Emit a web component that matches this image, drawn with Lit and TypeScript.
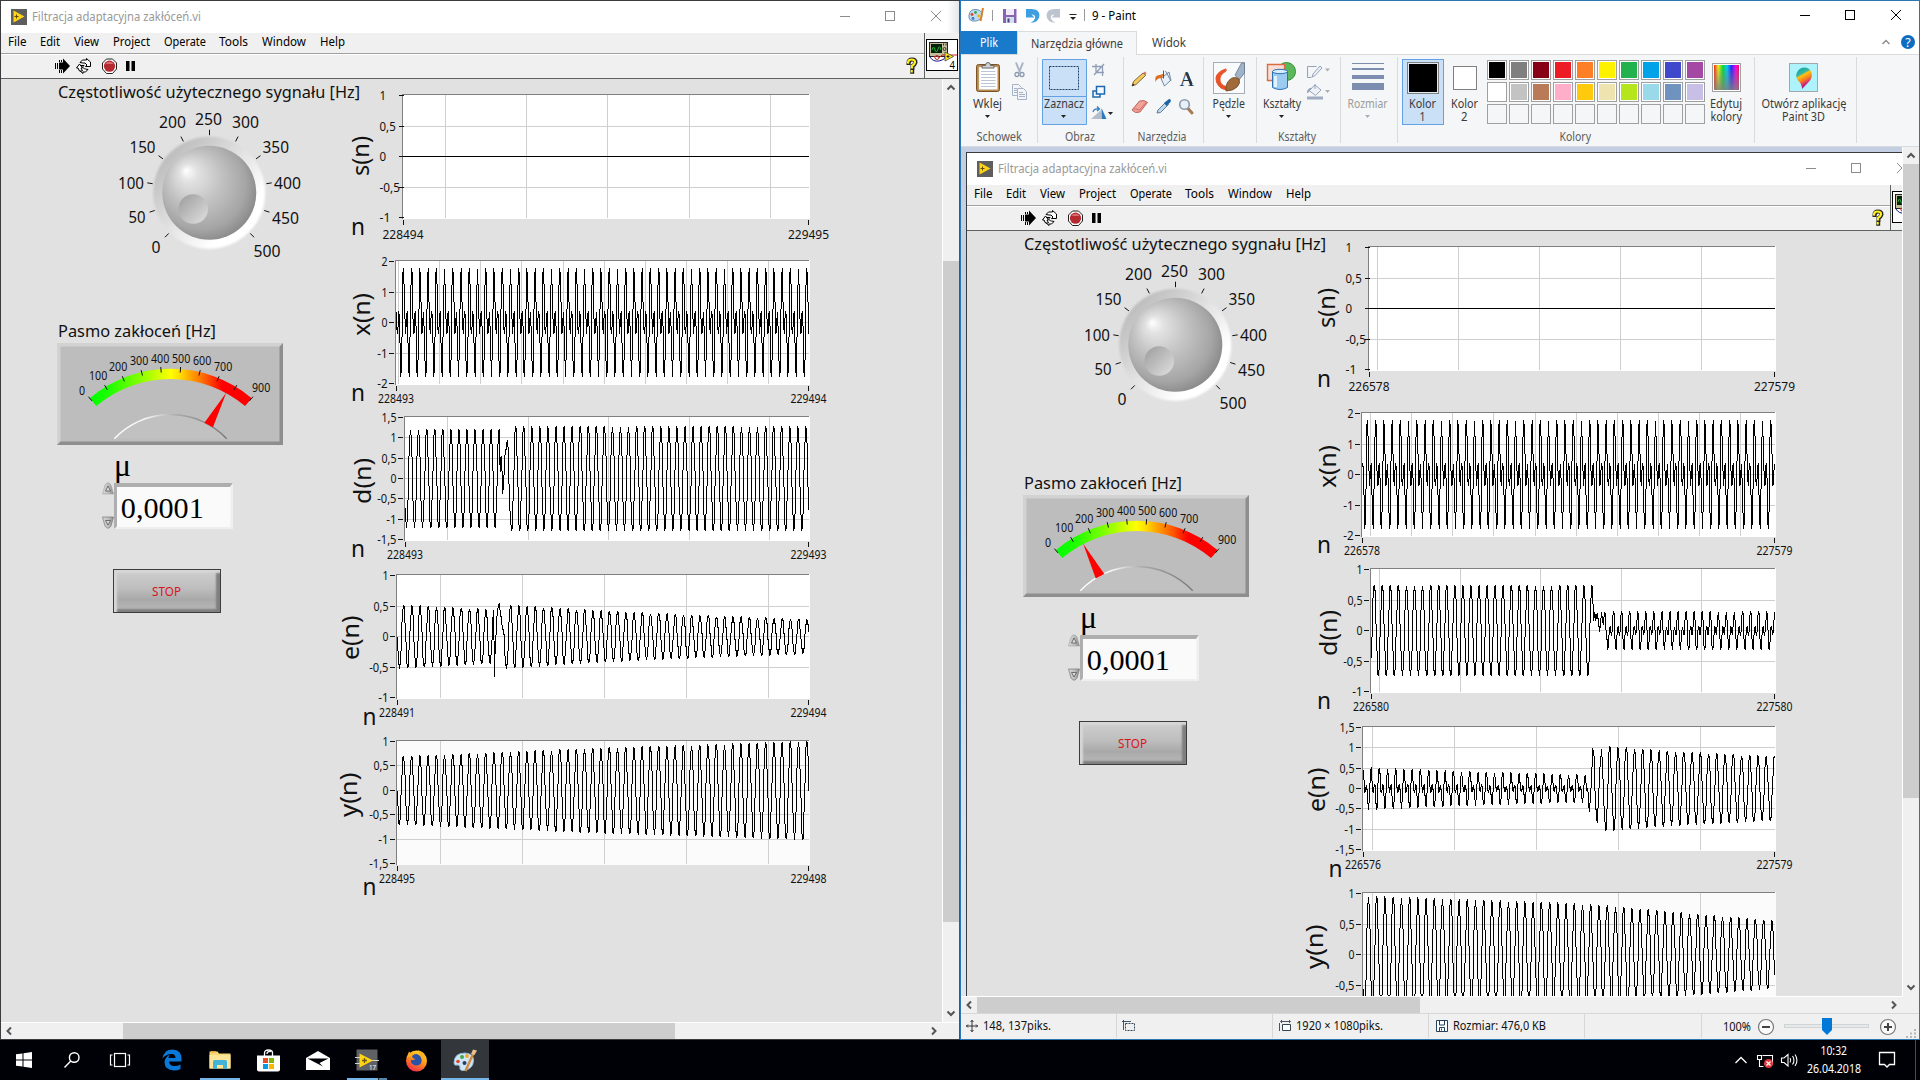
import { LitElement, html, svg, css, nothing } from "lit";
import { customElement, property } from "lit/decorators.js";

const FONT = `"Noto Sans","Open Sans",sans-serif`;

/** SVG text fitted to a given width. */
const T = (s: string, x: number, y: number, w: number, size = 12, fill = "#111", family = FONT) =>
  svg`<text x=${x} y=${y} textLength=${w} lengthAdjust="spacingAndGlyphs" font-size=${size} fill=${fill} font-family=${family}>${s}</text>`;

/** Inline label of a fixed width, usable in flex rows. */
const L = (s: string, w: number, size = 12, fill = "#111") =>
  html`<svg width=${w} height="16" overflow="visible">${T(s, 0, 12, w, size, fill)}</svg>`;

type Tick = [number, string];
type Wave = (x: number) => number;
interface Chart {
  name: string; nameX: number; nameY: number; nameLen: number;
  top: number; h: number;            // slice of the panel that the chart takes
  x0: number; y0: number; y1: number;
  zero: number; unit: number;        // y of value 0, pixels per 1
  ticks: Tick[]; grid: number[];
  from?: string; to?: string;
  nX: number; nY: number;
  at: number; period: number;        // x of one crest, pixels per cycle
  wave: Wave; bg?: string; wide?: boolean;
}

const TAU = Math.PI * 2;
const peakSin = (x: number, peak: number, period: number) => Math.cos((TAU * (x - peak)) / period);
const double = (x: number, peak: number, period: number, dir = 1) => {
  const t = dir * (TAU * (x - peak)) / period + 0.936;
  return Math.sin(t) + Math.sin(2 * t);
};
const lerp = (pts: [number, number][], x: number) => {
  if (x <= pts[0][0]) return pts[0][1];
  for (let i = 1; i < pts.length; i++)
    if (x <= pts[i][0]) {
      const [a, b] = [pts[i - 1], pts[i]];
      return a[1] + ((b[1] - a[1]) * (x - a[0])) / (b[0] - a[0]);
    }
  return pts[pts.length - 1][1];
};

const P = 8.232, Q = 8.062;
const base = {
  s: { name: "s(n)", nameX: 368.5, nameY: 176, nameLen: 40, top: 79, h: 170, x0: 402.5, y0: 94.5, y1: 218.5, nX: 351, nY: 234.5, wide: true, at: 403, period: P },
  x: { name: "x(n)", nameX: 369.5, nameY: 336, nameLen: 43, top: 249, h: 162, x0: 395.5, y0: 260.5, y1: 384.5, nX: 351, nY: 400.5, period: P },
  d: { name: "d(n)", nameX: 370.5, nameY: 504, nameLen: 46, top: 411, h: 156, x0: 404.5, y0: 416.5, y1: 540.5, nX: 351, nY: 557, period: Q },
  e: { name: "e(n)", nameX: 359, nameY: 660, nameLen: 44.5, top: 567, h: 166, x0: 396.5, y0: 574.5, y1: 698.5, nX: 362.5, nY: 725, period: P },
  y: { name: "y(n)", nameX: 357, nameY: 817, nameLen: 44.5, top: 733, h: 170, x0: 396.5, y0: 740.5, y1: 864.5, nX: 362.5, nY: 895, bg: "#fbfbfb", period: P },
};
const T1: Tick[] = [[575.5, "1"], [606.5, "0,5"], [636.5, "0"], [667.5, "-0,5"], [697.5, "-1"]];
const T15: Tick[] = [[575.5, "1,5"], [595.5, "1"], [616.5, "0,5"], [636.5, "0"], [656.5, "-0,5"], [677.5, "-1"], [697.5, "-1,5"]];
const shift = (t: Tick[], d: number): Tick[] => t.map(([y, s]) => [y + d, s]);
const TX: Tick[] = [[261.5, "2"], [292.5, "1"], [322.5, "0"], [353.5, "-1"], [383.5, "-2"]];
const TS: Tick[] = [[95.5, "1"], [126.5, "0,5"], [156.5, "0"], [187.5, "-0,5"], [217.5, "-1"]];

const LEFT: Chart[] = [
  { ...base.s, zero: 156.5, unit: 61, ticks: TS, grid: [445.5, 526.5, 607.5, 689.5, 770.5], from: "228494", to: "229495", wave: () => 0 },
  { ...base.x, at: 403.4, zero: 322.5, unit: 30.5, ticks: TX, grid: [398.5, 439.5, 480.5, 521.5, 563.5, 604.5, 645.5, 686.5, 727.5, 768.5], from: "228493", to: "229494", wave: (x) => double(x, 403.4, P) },
  {
    ...base.d, at: 410.5, zero: 478.5, unit: 40.7, ticks: shift(T15, -158), grid: [447.5, 528.5, 608.5, 689.5, 769.5], from: "228493", to: "229493",
    wave: (x) => x < 499.5 ? 1.21 * peakSin(x, 410.5, Q)
      : x < 511.5 ? lerp([[499.5, 1.18], [500.3, 0.1], [501, 0.65], [502.8, -0.38], [505, 0.6], [507.3, 0.93], [508.5, 0.6], [509.5, -0.7], [511.5, -1.27]], x)
      : 1.28 * peakSin(x, 515.7, Q),
  },
  {
    ...base.e, at: 403.6, zero: 636.5, unit: 61, ticks: T1, grid: [440.5, 522.5, 604.5, 686.5, 768.5], from: "228491", to: "229494",
    wave: (x) => x < 493.8 ? lerp([[397, 0.52], [494, 0.44]], x) * peakSin(x, 403.6, P)
      : x < 506 ? lerp([[493.8, 0.4], [494.2, -0.66], [494.7, -0.66], [495, -0.36], [497, 0.4], [499.3, 0.55], [501.5, 0.25], [504, 0.02], [505.5, -0.46], [506, -0.5]], x)
      : lerp([[506, 0.52], [600, 0.42], [700, 0.345], [809, 0.28]], x) * peakSin(x, 403.6, P),
  },
  {
    ...base.y, at: 403.4, zero: 790.5, unit: 48.8, ticks: [[741.5, "1"], [765.5, "0,5"], [790.5, "0"], [814.5, "-0,5"], [839.5, "-1"], [863.5, "-1,5"]],
    grid: [440.5, 522.5, 604.5, 686.5, 768.5], from: "228495", to: "229498",
    wave: (x) => lerp([[397, 0.69], [500, 0.78], [600, 0.87], [700, 0.93], [809, 1.01]], x) * peakSin(x, 403.4, P),
  },
];
const RIGHT: Chart[] = [
  { ...base.s, zero: 156.5, unit: 61, ticks: TS, grid: [411.5, 492.5, 573.5, 654.5, 735.5], from: "226578", to: "227579", wave: () => 0 },
  { ...base.x, at: 401.4, zero: 322.5, unit: 30.5, ticks: TX, grid: [404.5, 445.5, 486.5, 527.5, 569.5, 610.5, 651.5, 692.5, 733.5, 774.5], from: "226578", to: "227579", wave: (x) => double(x, 401.4, P) },
  {
    ...base.d, at: 408.2, zero: 478.5, unit: 61, ticks: shift(T1, -158), grid: [413.5, 494.5, 574.5, 655.5, 735.5], from: "226580", to: "227580",
    wave: (x) => x < 626.3 ? 0.745 * peakSin(x, 408.2, Q)
      : x < 642 ? lerp([[626.3, 0.66], [627.7, 0.12], [628.6, 0.3], [629.8, 0.15], [631, 0.29], [632, 0.22], [633.7, -0.05], [635.5, 0.32], [637.2, 0.1], [639, 0.32], [640.4, -0.05], [642, -0.31]], x)
      : 0.18 * double(x, 647.5, Q, -1),
  },
  {
    ...base.e, at: 405, zero: 636.5, unit: 40.7, ticks: T15, grid: [406.5, 488.5, 570.5, 652.5, 734.5], from: "226576", to: "227579",
    wave: (x) => x < 622 ? lerp([[397, 0.295], [500, 0.235], [622, 0.187]], x) * double(x, 405, P)
      : x < 639.5 ? lerp([[622, 0.0], [623.2, -0.6], [624, -0.45], [625, 0], [626.6, 1.01], [628, 0.8], [629.6, -0.45], [631.4, -0.84], [633.3, 0.3], [635.7, 1.04], [637.3, 0], [639.5, -1.04]], x)
      : lerp([[639, 1.04], [700, 0.92], [809, 0.78]], x) * peakSin(x, 643.8, P),
  },
  {
    ...base.y, at: 402.5, zero: 802.5, unit: 61, ticks: [[741.5, "1"], [772.5, "0,5"], [802.5, "0"], [833.5, "-0,5"]],
    grid: [406.5, 488.5, 570.5, 652.5, 734.5],
    wave: (x) => lerp([[397, 0.96], [600, 0.84], [640, 0.8], [690, 0.72], [735, 0.65], [809, 0.55]], x) * peakSin(x, 402.5, P),
  },
];

/** Polyline of a wave taken at 20 samples per cycle, snapped to whole pixels. */
const trace = (c: Chart) => {
  const dx = c.period / 20;
  let out = "", last = "";
  for (let k = Math.ceil((c.x0 + 0.6 - c.at) / dx); c.at + k * dx < 809; k++) {
    const x = c.at + k * dx;
    const p = `${Math.floor(x) + 0.5},${Math.round(c.zero - c.wave(x) * c.unit - 0.5) + 0.5}`;
    if (p !== last) out += p + " ";
    last = p;
  }
  return out;
};
const numWidth = (s: string, wide = false) =>
  [...s].reduce((a, ch) => a + (ch === "," ? 3 : ch === "-" ? 4.3 : wide ? 6.6 : 6), 0);

/** Classic thin scroll bar with arrow heads and a thumb given in pixels. */
@customElement("scroll-bar")
class ScrollBar extends LitElement {
  @property({ type: Boolean, reflect: true }) horizontal = false;
  @property({ type: Number }) before = 0;
  @property({ type: Number }) thumb = 100;
  static styles = css`
    :host { display: flex; flex-direction: column; align-items: stretch; width: 17px; box-sizing: border-box; background: #f0f0f0; border-left: 1px solid #fff; }
    :host([horizontal]) { flex-direction: row; width: auto; height: 17px; border-left: 0; border-top: 1px solid #fff; }
    .arrow { flex: none; width: 16px; height: 16px; }
    .thumb { background: #cdcdcd; flex: none; }
    .rest { flex: 1; }
    path { fill: none; stroke: #555; stroke-width: 2; }
  `;
  arrow(d: string) { return html`<svg class="arrow" viewBox="0 0 16 16"><path d=${d} /></svg>`; }
  render() {
    const h = this.horizontal;
    return html`
      ${this.arrow(h ? "M10 4.5L6.5 8L10 11.5" : "M4.5 10.5L8 7L11.5 10.5")}
      <div style=${h ? `width:${this.before}px` : `height:${this.before}px`}></div>
      <div class="thumb" style=${h ? `width:${this.thumb}px` : `height:${this.thumb}px`}></div>
      <div class="rest"></div>
      ${this.arrow(h ? "M5 4.5L8.5 8L5 11.5" : "M4.5 5.5L8 9L11.5 5.5")}`;
  }
}

/** A LabVIEW front panel window. */
@customElement("vi-window")
class ViWindow extends LitElement {
  @property({ attribute: false }) charts: Chart[] = LEFT;
  @property({ type: Number }) needle = 28.6;
  @property({ type: Boolean }) cropped = false;
  static styles = css`
    :host { display: block; width: 960px; height: 1040px; box-sizing: border-box; background: #e1e1e1; border: 1px solid #3b3b3f; border-right: 0; }
    svg { display: block; flex: none; overflow: visible; }
    .win { display: flex; flex-direction: column; width: 958px; height: 1038px; border-right: 1px solid #4a5560; }
    .title { display: flex; align-items: center; height: 32px; background: linear-gradient(90deg, #fff 946px, #e4e6e8); padding-left: 10px; }
    .title .name { margin: 0 0 0 5px; }
    .ctl { margin-left: auto; }
    .bars { display: flex; height: 46px; background: #f0f0f0; border-bottom: 1px solid #606460; box-sizing: border-box; }
    .left { flex: 1; display: flex; flex-direction: column; }
    .menu { display: flex; gap: 13.900px; align-items: flex-start; padding: 1px 0 0 6.500px; height: 19px; border-bottom: 1px solid #a0a0a0; box-shadow: 0 1px #fff; }
    .tools { display: flex; align-items: center; height: 25px; }
    .run { margin-left: 54px; }
    .help { margin-left: auto; margin-right: 6px; }
    .corner { width: 35px; border-left: 1px solid #606460; display: flex; align-items: center; padding: 0 0 1px 1px; box-sizing: border-box; }
    .body { display: flex; flex: 1; min-height: 0; }
    .panel { display: flex; flex: 1; background: #e1e1e1; overflow: hidden; }
    .controls { width: 333px; flex: none; display: flex; flex-direction: column; }
    .plots { flex: none; display: flex; flex-direction: column; width: 500px; }
    .gauge { margin: 51px 0 0 56px; }
    .mu { margin: 4px 0 0 100px; }
    .stop { margin: 40px 0 0 112px; width: 108px; height: 44px; box-sizing: border-box; border: 1px solid #3c3c3c; background: linear-gradient(#cfcfcf, #bdbdbd 45%, #a9a9a9 70%, #bababa); box-shadow: inset 3px 3px 2px #d6d6d6, inset -4px -3px 2px #7f7f7f; display: flex; align-items: center; justify-content: center; padding: 2px 1px 0 0; }
    .foot { display: flex; height: 17px; }
    .foot scroll-bar { flex: 1; }
    .gap { width: 16px; background: #f0f0f0; border-top: 1px solid #fff; }
  `;

  chart(c: Chart) {
    const tx = c.wide ? 398.5 : c.x0 - 6.5;
    const lblW = c.wide ? 41 : 36;
    const ly = c.y1 + 18.5 + (c.wide ? 2 : 0);
    return html`<svg width="500" height=${c.h} viewBox="334 ${c.top} 500 ${c.h}">
      <g shape-rendering="crispEdges">
        <rect x=${c.x0 - 0.5} y=${c.y0 - 0.5} width=${810.5 - c.x0} height=${c.y1 - c.y0 + 0.5} fill=${c.bg ?? "#fff"} />
        ${c.grid.map((x) => svg`<path d="M${x} ${c.y0}V${c.y1 - 0.5}" stroke="#cfcfcf" />`)}
        ${c.ticks.slice(1, c.from ? -1 : undefined).map(([y]) => svg`<path d="M${c.x0} ${y}H809" stroke="#cfcfcf" />`)}
        <path d="M${c.x0} ${c.y1}V${c.y0}H809" fill="none" stroke="#808080" />
        ${c.ticks.map(([y]) => svg`<path d="M${tx} ${y}h5" stroke="#111" />`)}
        <path d="M${c.x0 + 1} ${c.y1 + 1.5}v5M808.5 ${c.y1 + 1.5}v5" stroke="#111" />
        <polyline points=${trace(c)} fill="none" stroke="#000" />
      </g>
      ${c.ticks.map(([y, s]) => {
        const w = numWidth(s, c.wide);
        return T(s, c.wide ? 379.5 : c.x0 - 8 - w, y + 4.8, w, 12.5);
      })}
      ${c.from ? T(c.from, c.x0 + 0.5 - lblW / 2, ly, lblW, 12.5) : nothing}
      ${c.to ? T(c.to, 808.5 - lblW / 2, ly, lblW, 12.5) : nothing}
      ${c.from ? T("n", c.nX, c.nY, 14, 24) : nothing}
      <g transform="translate(${c.nameX} ${c.nameY}) rotate(-90)">${T(c.name, 0, 0, c.nameLen, 23)}</g>
    </svg>`;
  }

  knob() {
    const cx = 209.5, cy = 192.7;
    const marks = Array.from({ length: 11 }, (_, i) => {
      const a = ((-135 + 27 * i) * Math.PI) / 180, s = Math.sin(a), c = -Math.cos(a);
      return svg`<path d="M${cx + 57.5 * s} ${cy + 57.5 * c}L${cx + 63 * s} ${cy + 63 * c}" stroke="#111" />`;
    });
    const labels: [string, number, number, number][] = [
      ["0", 151.5, 253, 9], ["50", 128.5, 223, 17], ["100", 118, 188.5, 26], ["150", 129.5, 152.5, 26], ["200", 159, 128, 27], ["250", 195, 124.5, 27],
      ["300", 232, 128, 27], ["350", 262.5, 152.5, 26.5], ["400", 274, 188.5, 27], ["450", 272, 223.5, 27], ["500", 253.5, 256.5, 27],
    ];
    return html`<svg width="333" height="187" viewBox="1 79 333 187">
      <defs>
        <linearGradient id="ring" x1=".12" y1=".15" x2=".85" y2=".85"><stop offset="0" stop-color="#bcbcbc" /><stop offset=".5" stop-color="#e4e4e4" /><stop offset=".85" stop-color="#fff" /></linearGradient>
        <radialGradient id="ball" cx=".5" cy=".5" r=".78" fx=".25" fy=".26"><stop offset="0" stop-color="#fff" /><stop offset=".12" stop-color="#e2e2e2" /><stop offset=".35" stop-color="#c4c4c4" /><stop offset=".62" stop-color="#a5a5a5" /><stop offset=".8" stop-color="#808080" /><stop offset="1" stop-color="#333" /></radialGradient>
        <linearGradient id="dimple" x1=".1" y1=".1" x2=".9" y2=".9"><stop offset="0" stop-color="#a2a2a2" /><stop offset="1" stop-color="#dadada" /></linearGradient>
        <filter id="soft" x="-10%" y="-10%" width="120%" height="120%"><feGaussianBlur stdDeviation="1" /></filter>
      </defs>
      ${T("Częstotliwość użytecznego sygnału [Hz]", 58, 98, 302, 16)}
      ${marks}
      ${labels.map(([s, x, y, w]) => T(s, x, y, w, 16))}
      <circle cx="209.2" cy="192.7" r="56" fill="url(#ring)" filter="url(#soft)" />
      <circle cx="209.3" cy="192.8" r="47" fill="url(#ball)" />
      <circle cx="193.2" cy="209" r="14.8" fill="url(#dimple)" />
    </svg>`;
  }

  gauge() {
    const cx = 170.7, cy = 494.7;
    const pt = (deg: number, r: number) => {
      const a = (deg * Math.PI) / 180;
      return `${(cx + r * Math.sin(a)).toFixed(2)} ${(cy - r * Math.cos(a)).toFixed(2)}`;
    };
    const labels: [string, number, number][] = [
      ["0", 82, 395], ["100", 98, 380], ["200", 118, 371], ["300", 139, 365], ["400", 160, 363], ["500", 181, 363], ["600", 202, 365], ["700", 223, 371], ["900", 261, 392],
    ];
    const n = this.needle;
    return html`<svg class="gauge" width="226" height="128" viewBox="57 317 226 128">
      <defs>
        <linearGradient id="scale" gradientUnits="userSpaceOnUse" x1="90" y1="0" x2="251" y2="0"><stop offset="0" stop-color="#0f0" /><stop offset=".12" stop-color="#1eff00" /><stop offset=".3" stop-color="#80ff00" /><stop offset=".5" stop-color="#ff0" /><stop offset=".56" stop-color="#ffdc00" /><stop offset=".62" stop-color="#ffa800" /><stop offset=".72" stop-color="#ff5c00" /><stop offset=".82" stop-color="#f00" /></linearGradient>
        <linearGradient id="hub" x1="0" x2="1"><stop offset="0" stop-color="#fff" /><stop offset=".3" stop-color="#f4f4f4" /><stop offset=".55" stop-color="#aaa" /><stop offset="1" stop-color="#777" /></linearGradient>
      </defs>
      ${T("Pasmo zakłoceń [Hz]", 58, 337, 158, 16)}
      <rect x="57" y="343" width="226" height="102" fill="#bdbdbd" />
      <path d="M57 343H283L280 346.500H60.500V441L57 445Z" fill="#d2d2d2" />
      <path d="M283 343V445H57L60.500 441.500H279.500V346.500Z" fill="#8e8e8e" />
      <path d="M${pt(-40, 126)}A126 126 0 0 1 ${pt(40, 126)}L${pt(40, 115.7)}A115.700 115.700 0 0 0 ${pt(-40, 115.7)}Z" fill="url(#scale)" />
      ${Array.from({ length: 10 }, (_, i) => svg`<path d="M${pt(-40 + (80 / 9) * i, 122.5)}L${pt(-40 + (80 / 9) * i, 128)}" stroke="#111" />`)}
      ${labels.map(([s, x, y]) => T(s, x - s.length * 3, y, s.length * 6.1, 12.3))}
      <path d="M114.300 438.700A77.400 77.400 0 0 1 226.700 438.700Z" fill="#c1c1c1" />
      <path d="M114.300 438.700A77.400 77.400 0 0 1 226.700 438.700" fill="none" stroke="url(#hub)" stroke-width="1.4" />
      <path d="M${pt(n, 116)}L${pt(n - 3.5, 79.5)}L${pt(n + 3.5, 79.5)}Z" fill="#f00" />
    </svg>`;
  }

  mu() {
    return html`<svg class="mu" width="133" height="80" viewBox="101 449 133 80">
      <defs><linearGradient id="spin" x1="0" x2="1"><stop offset="0" stop-color="#d8d8d8" /><stop offset=".6" stop-color="#bbb" /><stop offset="1" stop-color="#888" /></linearGradient></defs>
      ${T("μ", 114, 476, 17, 32, "#000", "Liberation Serif, serif")}
      <path d="M114 483H233L230 487H117V526L114 529Z" fill="#aeaeae" />
      <path d="M233 483V529H114L117 527H230V487Z" fill="#efefef" />
      <rect x="117" y="487" width="113.500" height="40" fill="#fafafa" />
      ${T("0,0001", 120.8, 518, 83, 30, "#000", "Liberation Serif, serif")}
      <path d="M102.500 494L105 485Q108 480.500 111 485L113.500 494Z" fill="url(#spin)" stroke="#999" stroke-width=".5" />
      <path d="M105.500 491L108 486L110.500 491H105.500" fill="#ddd" stroke="#555" stroke-width=".8" />
      <path d="M102.500 517L105 526Q108 530.500 111 526L113.500 517Z" fill="url(#spin)" stroke="#777" stroke-width=".7" />
      <path d="M105.500 520.500L108 525L110.500 520.500Z" fill="#ddd" stroke="#555" stroke-width=".8" />
    </svg>`;
  }

  render() {
    const menu: [string, number][] = [["File", 18.5], ["Edit", 20], ["View", 25], ["Project", 37], ["Operate", 42], ["Tools", 29], ["Window", 44], ["Help", 25]];
    return html`<div class="win">
      <div class="title">
        <svg width="16" height="16" viewBox="0 0 16 16"><rect width="16" height="16" fill="#5e5e5e" /><path d="M2.500 1.500L13.500 7.500L2.500 13.500Z" fill="#ffd415" /><path d="M3.500 7.500h4M5.500 5.500v4" stroke="#5e4a00" /></svg>
        <div class="name">${L("Filtracja adaptacyjna zakłóceń.vi", 169, 12, "#999")}</div>
        <svg class="ctl" width="120" height="32" viewBox="839 1 120 32" fill="none" stroke="#8b8b8b">
          <path d="M840 16.500h10" shape-rendering="crispEdges" /><rect x="885.500" y="11.500" width="9" height="9" shape-rendering="crispEdges" /><path d="M931 11l10 10M941 11l-10 10" />
        </svg>
      </div>
      <div class="bars">
        <div class="left">
          <div class="menu">${menu.map(([s, w]) => L(s, w, 12, "#000"))}</div>
          <div class="tools">
            <svg class="run" width="82" height="16" viewBox="55 58 82 16">
              <path d="M59 62.500h4v-4l7 7.500l-7 7.500v-4h-4Z" fill="#000" /><path d="M55.500 63v6M57.500 63v6M59.500 60v2M61.500 60v2M59.500 70v3M61.500 70v3" stroke="#000" stroke-width="1" shape-rendering="crispEdges" />
              <g fill="#fff" stroke="#000" stroke-width="1"><path d="M80 62.500l2.500-2.500h4v-1.500l4 3.500v4.500h-5l1.500-1.500l-2-2h-2Z" /><path d="M88 69.500l-2.500 2.500h-2.500v1.500l-4-3.500v-4.500h5l-1.500 1.500l2 2h1Z" /><path d="M76.500 68l3-4l3 4h-1.500l1.500 3h-3l-1.500-3Z" /></g>
              <path d="M106.500 59h6l4 4v6l-4 4.500h-6l-4-4.500v-6Z" fill="#fff" stroke="#222" /><circle cx="109.500" cy="66.200" r="5.600" fill="#b42a30" /><path d="M105.500 64a4.500 4 0 0 1 8 0Z" fill="#dc6a6e" />
              <path d="M126 61h3.500v10h-3.500ZM131.500 61h3.500v10h-3.500Z" fill="#000" />
            </svg>
            <svg class="help" width="12" height="16" viewBox="906 58 12 16"><g fill="none" stroke-linecap="square"><path d="M908.500 63q0-3.500 3.500-3.500q3.800 0 3.500 3q-.5 2-3 3.500v1.800M912.200 71.500v.3" stroke="#222" stroke-width="4" /><path d="M908 62.500q.2-3 3.500-3q3.800 0 3.500 3q-.5 2-3 3.500v1.500M911.700 71v.3" stroke="#ffef1a" stroke-width="2.200" /></g></svg>
          </div>
        </div>
        <div class="corner">
          <svg width="32" height="32" viewBox="926 39 32 32"><rect x="926.500" y="39.500" width="31" height="31" fill="#fff" stroke="#000" />
            <rect x="929.500" y="42.500" width="18" height="14" fill="#c3bd9c" stroke="#222" /><rect x="931" y="44" width="11" height="9" fill="#05230a" /><path d="M932 50q1.500-6 3 0q1.500 4 3-1q1.500-5 3 1" fill="none" stroke="#27b33a" />
            <circle cx="944.500" cy="49" r="1.500" fill="none" stroke="#333" /><path d="M943.500 43.500v2M946 43.500v2" stroke="#333" />
            <path d="M930 57q3 5 9 4q6-1 6-4" fill="none" stroke="#1c1c8c" /><path d="M934 57q3-2 4 0t4-2h15" fill="none" stroke="#d02020" /><circle cx="937" cy="57.500" r="2" fill="none" stroke="#a33" />
            <path d="M945 52l8.500 4.500l-8.500 4.500Z" fill="#ffe81a" stroke="#444" stroke-width=".8" /><path d="M946.500 56.500h3M948 55v3" stroke="#222" />
            ${this.cropped ? nothing : T("4", 949.5, 68.5, 5.5, 10.5, "#000")}</svg>
        </div>
      </div>
      <div class="body">
        <div class="panel">
          <div class="controls">
            ${this.knob()}${this.gauge()}${this.mu()}
            <button class="stop">${L("STOP", 29, 12, "#d8141c")}</button>
          </div>
          <div class="plots">${this.charts.map((c) => this.chart(c))}</div>
        </div>
        <scroll-bar .before=${166} .thumb=${661}></scroll-bar>
      </div>
      <div class="foot"><scroll-bar horizontal .before=${106} .thumb=${552}></scroll-bar><div class="gap"></div></div>
    </div>`;
  }
}

const INK = "#3a3a3a";

@customElement("paint-window")
class PaintWindow extends LitElement {
  static styles = css`
    :host { display: flex; flex-direction: column; width: 960px; height: 1040px; box-sizing: border-box; border: 1px solid #2b76b4; background: #fff; overflow: hidden; }
    svg { display: block; flex: none; overflow: visible; }
    .title { height: 30px; }
    .tabs { display: flex; height: 24px; border-bottom: 1px solid #dadbdc; box-sizing: border-box; flex: none; }
    .tab { display: flex; align-items: center; justify-content: center; box-sizing: border-box; height: 24px; }
    .file { width: 56px; background: #1979ca; height: 23px; }
    .active { width: 120px; background: #f5f6f7; border: 1px solid #dadbdc; border-bottom: 0; }
    .view { width: 64px; }
    .extra { margin-left: auto; }
    .ribbon { display: flex; height: 92px; box-sizing: border-box; background: #f5f6f7; border-bottom: 1px solid #dadbdc; flex: none; }
    .group { border-right: 1px solid #dadbdc; height: 86px; margin-top: 2px; box-sizing: border-box; flex: none; }
    .work { display: flex; height: 849px; flex: none; }
    .view-port { flex: 1; min-width: 0; padding: 5px 0 0 5px; box-sizing: border-box; background: linear-gradient(#c3cee2, #ccd7e8 40%, #dde7f3); overflow: hidden; height: 849px; }
    .clip { overflow: hidden; height: 844px; }
    .foot { display: flex; height: 18px; box-sizing: border-box; border-bottom: 1px solid #d7d7d7; flex: none; }
    .foot scroll-bar { flex: 1; }
    .gap { width: 16px; background: #f0f0f0; }
    .status { display: flex; flex: 1; background: #f0f0f0; min-height: 0; }
    .cell { display: flex; align-items: center; gap: 5px; border-right: 1px solid #d7d7d7; box-sizing: border-box; padding-left: 5px; height: 24px; }
    .c1 { width: 156px; } .c2 { width: 156px; } .c3 { width: 156px; } .c4 { width: 156px; padding-left: 7px; } .c5 { width: 117px; }
  `;

  group(x0: number, x1: number, art: unknown, label: unknown = nothing) {
    return html`<div class="group" style="width:${x1 - x0}px"><svg width=${x1 - x0 - 1} height="86" viewBox="${x0} 57 ${x1 - x0 - 1} 86">${art}${label}</svg></div>`;
  }
  drop(x: number, y: number, c = "#222") { return svg`<path d="M${x - 2.5} ${y}h5l-2.500 3Z" fill=${c} />`; }

  ribbon() {
    const rows = [
      ["#000", "#7f7f7f", "#880015", "#ed1c24", "#ff7f27", "#fff200", "#22b14c", "#00a2e8", "#3f48cc", "#a349a4"],
      ["#fff", "#c3c3c3", "#b97a57", "#ffaec9", "#ffc90e", "#efe4b0", "#b5e61d", "#99d9ea", "#7092be", "#c8bfe7"],
      Array(10).fill(""),
    ];
    const lab = (s: string, x: number, w: number) => T(s, x, 141, w, 12, "#5c5c5c");
    return html`<div class="ribbon">
      ${this.group(961, 1038, svg`
        <rect x="976.500" y="64.500" width="23" height="27" rx="2" fill="#b98748" stroke="#7c5526" /><rect x="979" y="67" width="18.500" height="22.500" fill="#fff" stroke="#ccc" stroke-width=".5" /><path d="M981 71.500h14.500M981 74.500h14.500M981 77.500h14.500M981 80.500h14.500M981 83.500h14.500M981 86.500h14.500" stroke="#b9c6d8" />
        <path d="M982 68v-2.500h3.500q0-3 2.500-3t2.500 3h3.500v2.500Z" fill="#d2d2d2" stroke="#666" />
        <path d="M1016 62.500l4 10M1023 62.500l-4 10" stroke="#a9b4c4" stroke-width="2" /><g fill="none" stroke="#8c9ab0" stroke-width="1.300"><circle cx="1017" cy="74.500" r="2" /><circle cx="1022" cy="74.500" r="2" /></g>
        <g fill="#f3f5f9" stroke="#a6b2c6"><path d="M1012.500 84.500h6l3 3v8h-9Z" /><path d="M1017.500 88.500h6l3 3v8h-9Z" /><path d="M1019 92.500h4M1019 94.500h6M1019 96.500h6M1014 88.500h3M1014 90.500h3M1014 92.500h3" /></g>
        ${T("Wklej", 973, 108, 29, 12, INK)}${this.drop(987.5, 115)}`, lab("Schowek", 976.5, 45.5))}
      ${this.group(1038, 1124, svg`
        <path d="M1042.500 59.500h44v65h-44ZM1042.500 96.500h44" fill="#c9e0f7" stroke="#62a2e4" /><rect x="1049.500" y="66.500" width="29" height="23" fill="none" stroke="#1c3f66" stroke-dasharray="2 1" />
        ${T("Zaznacz", 1044, 108, 40, 12, INK)}${this.drop(1063.5, 115)}
        <g fill="none" stroke="#8f9db5" stroke-width="1.300"><path d="M1096 64v8.500h8M1092 66.500h10.500v9.500M1094 75l10-11" /></g>
        <g fill="#f5f9ff" stroke="#1b68b0" stroke-width="1.500"><rect x="1093" y="91" width="7" height="6" /><rect x="1096.500" y="86.500" width="8" height="7.500" /></g>
        <path d="M1091 119h10v-9Z" fill="#b8bec8" /><path d="M1101.500 119v-11l5 11Z" fill="#2a7ac0" /><path d="M1093 112q1-4 6-3m-2-2.500l2.500 2.500l-2.500 2" fill="none" stroke="#2a7ac0" stroke-width="1.200" />${this.drop(1110.5, 112)}`, lab("Obraz", 1065, 30))}
      ${this.group(1124, 1204, svg`
        <path d="M1132 86l1.500-4.500l9.500-8.500l2.500 2.500l-9.500 9Z" fill="#f6c95a" stroke="#6c5a3c" stroke-width=".9" /><path d="M1143 73l2-1.500l1.500 2l-1.200 1.800Z" fill="#d8776c" /><path d="M1132 86l1-2.500l1.500 1.500Z" fill="#222" />
        <path d="M1161 78.500l8-6.500l1.500 6.500l.5 1.500l-6.500 6Z" fill="#e9eff6" stroke="#6d87a5" /><path d="M1165.500 71l5.500 10" stroke="#6d87a5" /><path d="M1155.500 82q-1.500-7 4-7l5-1.500l-3 5q-4-1-6 3.500Z" fill="#e0701f" /><path d="M1163.500 70.500v8" stroke="#4a5a6c" />
        ${T("A", 1179.5, 85.500, 14.5, 20, "#24384f", "Liberation Serif, serif")}<path d="M1186.800 73.500l4.700 11" stroke="#24384f" stroke-width="2.500" />
        <path d="M1132 110l7.500-9q5-1.500 8 1.500l-7.500 9.500q-5 2-8-2Z" fill="#f0a39b" stroke="#b8574f" stroke-width=".9" /><path d="M1133 108.500l6.500 1.500l7-8" fill="none" stroke="#d27068" />
        <path d="M1157 113l1-3l8-8l2.500 2.500l-8 8Z" fill="#bcd8ee" stroke="#5a6f88" stroke-width=".9" /><path d="M1164 103l5-4q2.500 0 1.500 3l-4 4Z" fill="#1c62a6" />
        <path d="M1188 108.500l4 4.500" stroke="#a8794e" stroke-width="3" stroke-linecap="round" /><circle cx="1184.500" cy="104.500" r="4.800" fill="#e4f0fa" stroke="#8f9aa8" stroke-width="1.600" />`, lab("Narzędzia", 1137.5, 49))}
      ${this.group(1204, 1257, svg`
        <rect x="1213.500" y="62.500" width="31" height="31" fill="#f8fafc" stroke="#a8aeb6" /><path d="M1225.500 69q-12 4-9 13q3 8 12 8l2-3q-9 0-10.500-6q-1-6 6-10Z" fill="#e8542a" stroke="#e8542a" stroke-linecap="round" />
        <path d="M1235 75l6.500-12h3v10l-5.500 7Z" fill="#9fb2c8" stroke="#5c6d80" stroke-width=".7" /><path d="M1226 91q-1-9 6-13q4-1.500 7 1q2 4-2 8q-4 4-11 4Z" fill="#a06a3a" stroke="#6e4520" stroke-width=".8" />
        ${T("Pędzle", 1212.5, 108, 32.5, 12, INK)}${this.drop(1228.5, 115)}`)}
      ${this.group(1257, 1341, svg`
        <circle cx="1286.500" cy="71.500" r="9" fill="#5cb85a" stroke="#2f8f34" /><path d="M1267.500 64.500h17v16h-17Z" fill="#f9dfd4" stroke="#dd6b47" stroke-width="1.400" />
        <path d="M1272.500 71.500q7.500-3.500 15 0v16q-7.500 4-15 0Z" fill="#9ccbf2" stroke="#2d72b8" /><ellipse cx="1280" cy="71.500" rx="7.500" ry="2.200" fill="#d8ecfb" stroke="#2d72b8" /><path d="M1275.500 76v11" stroke="#e2f2ff" stroke-width="3" />
        ${T("Kształty", 1263, 108, 38, 12, INK)}${this.drop(1281.5, 115)}
        <g fill="#eef1f6" stroke="#95a3ba"><path d="M1307.500 66.500h9M1307.500 66.500v11h4M1312 77l1-3l7-8l2 2l-7.500 8Z" /><path d="M1309 90.500l6-5.500l6 5l-5.500 5.500Z" /></g><path d="M1307.500 93q0-5 4-4.500l-2.500 2.500Z" fill="#95a3ba" stroke="#95a3ba" /><path d="M1307 96.500h16v3h-16Z" fill="#9fabbf" /><path d="M1315 84v5" stroke="#95a3ba" />${this.drop(1327.5, 68.500, "#a9adb5")}${this.drop(1327.5, 90, "#a9adb5")}`, lab("Kształty", 1278, 38))}
      ${this.group(1341, 1398, svg`
        <path d="M1352 63h32v1h-32ZM1352 68h32v2h-32ZM1352 75h32v4h-32ZM1352 83h32v7h-32Z" fill="#7c8db0" />
        ${T("Rozmiar", 1347.5, 108, 40, 12, "#9c9c9c")}${this.drop(1367.5, 115, "#a9adb5")}`)}
      ${this.group(1398, 1755, svg`
        <rect x="1402.500" y="59.500" width="41" height="65" fill="#c9e0f7" stroke="#62a2e4" /><rect x="1407.500" y="62.500" width="31" height="31" fill="#dfeaf5" stroke="#808080" /><rect x="1409" y="64" width="28" height="28" />
        ${T("Kolor", 1409, 108, 27, 12, INK)}${T("1", 1419.5, 121, 6, 12, INK)}
        <rect x="1453.500" y="66.500" width="23" height="23" fill="#fff" stroke="#808080" />${T("Kolor", 1451, 108, 27, 12, INK)}${T("2", 1461, 121, 6.5, 12, INK)}
        ${rows.map((r, j) => r.map((c, i) => svg`<rect x=${1487.5 + 22 * i} y=${60.5 + 22 * j} width="19" height="19" fill=${c ? "#fff" : "#f5f6f7"} stroke="#a0a0a0" />${c ? svg`<rect x=${1489 + 22 * i} y=${62 + 22 * j} width="16" height="16" fill=${c} />` : nothing}`))}
        <defs><linearGradient id="rb"><stop offset="0" stop-color="#f21" /><stop offset=".17" stop-color="#ee2" /><stop offset=".36" stop-color="#0d3" /><stop offset=".52" stop-color="#0cf" /><stop offset=".7" stop-color="#22f" /><stop offset=".88" stop-color="#f0e" /><stop offset="1" stop-color="#f04" /></linearGradient><linearGradient id="gr" x2="0" y2="1"><stop offset="0" stop-color="#808080" stop-opacity="0" /><stop offset="1" stop-color="#808080" stop-opacity=".85" /></linearGradient></defs>
        <rect x="1712.500" y="63.500" width="28" height="28" fill="#fff" stroke="#a0a0a0" /><rect x="1714" y="65" width="25" height="25" fill="url(#rb)" /><rect x="1714" y="65" width="25" height="25" fill="url(#gr)" />
        ${T("Edytuj", 1710, 108, 32, 12, INK)}${T("kolory", 1710.5, 121, 31.5, 12, INK)}`, lab("Kolory", 1559.5, 31.5))}
      ${this.group(1755, 1857, svg`
        <defs><linearGradient id="p3" x1=".2" y1="0" x2=".6" y2="1"><stop offset="0" stop-color="#0aa4a6" /><stop offset=".3" stop-color="#39b6a0" /><stop offset=".38" stop-color="#ffc20e" /><stop offset=".6" stop-color="#f47c20" /><stop offset=".8" stop-color="#d4207e" /><stop offset="1" stop-color="#5a1a8c" /></linearGradient></defs>
        <rect x="1789.500" y="63.500" width="28" height="28" fill="#aef3fb" stroke="#a0a8ae" /><path d="M1802 89q0-5-4-8.500q-3.500-4.500-.5-9q2.500-4 7-4t6.500 4q2 4.500-1 9q-3 3.500-8 8.500Z" fill="url(#p3)" />
        ${T("Otwórz aplikację", 1761.500, 108, 85, 12, INK)}${T("Paint 3D", 1782, 121, 43, 12, INK)}`)}
    </div>`;
  }

  render() {
    return html`
      <svg class="title" width="958" height="30" viewBox="961 1 958 30">
        <path d="M969 15q1-6 7-5.500q6 .5 6 5q0 5-6 6.500q-8 1-7-6Z" fill="#bfdcf0" stroke="#6a93b5" /><circle cx="972" cy="14.500" r="1.400" fill="#e2432e" /><circle cx="975.500" cy="12.500" r="1.400" fill="#34a853" /><circle cx="978.500" cy="16" r="1.400" fill="#f4b400" /><circle cx="973" cy="18.500" r="1.400" fill="#3b78c8" /><path d="M983 8l-2.500 13" stroke="#d9822b" stroke-width="2" />
        <path d="M992.500 10v11M1084.500 9v12" stroke="#9a9a9a" shape-rendering="crispEdges" />
        <path d="M1003 9h13.500v14H1003Z" fill="#8a64b0" /><rect x="1006" y="9" width="8" height="6" fill="#f1ecf7" /><rect x="1006" y="17" width="8" height="6" fill="#cfe0f0" /><rect x="1007.500" y="18.500" width="2" height="4" fill="#553a78" />
        <path d="M1026 9v8.500h8.500l-3-3q4.500 0 3.500 4q-1 2.500-4.500 4.500q9-1 9-8q-.5-6-8-6h-2.500Z" fill="#3d9ee0" />
        <path d="M1060 9v8.500h-8.500l3-3q-4.500 0-3.500 4q1 2.500 4.500 4.500q-9-1-9-8q.5-6 8-6h2.500Z" fill="#bcc4d0" />
        <path d="M1069.500 14.500h7" stroke="#222" /><path d="M1070 17h6l-3 3Z" fill="#222" />
        ${T("9 - Paint", 1092, 20, 44, 12, "#000")}
        <g fill="none" stroke="#000"><path d="M1800 15.500h10" shape-rendering="crispEdges" /><rect x="1845.500" y="10.500" width="9" height="9" shape-rendering="crispEdges" /><path d="M1891 10l10 10M1901 10l-10 10" /></g>
      </svg>
      <div class="tabs">
        <div class="tab file">${L("Plik", 18, 12, "#fff")}</div>
        <div class="tab active">${L("Narzędzia główne", 92, 12, "#3c3c3c")}</div>
        <div class="tab view">${L("Widok", 34, 12, "#3c3c3c")}</div>
        <svg class="extra" width="42" height="23" viewBox="1877 31 42 23"><path d="M1882.500 44l3.500-3.500l3.500 3.500" fill="none" stroke="#8a8a8a" stroke-width="1.400" /><circle cx="1908" cy="42" r="7" fill="#0c6cc0" />${T("?", 1905.300, 46.5, 5.5, 12, "#fff")}</svg>
      </div>
      ${this.ribbon()}
      <div class="work">
        <div class="view-port"><div class="clip"><vi-window cropped .charts=${RIGHT} .needle=${-27.5}></vi-window></div></div>
        <scroll-bar .before=${1} .thumb=${634}></scroll-bar>
      </div>
      <div class="foot"><scroll-bar horizontal .before=${0} .thumb=${443}></scroll-bar><div class="gap"></div></div>
      <div class="status">
        <div class="cell c1"><svg width="12" height="12" viewBox="0 0 12 12"><path d="M6 0v12M0 6h12M4.500 2L6 .5L7.500 2M4.500 10L6 11.500L7.500 10M2 4.500L.5 6L2 7.500M10 4.500L11.500 6L10 7.500" fill="none" stroke="#333" /></svg>${L("148, 137piks.", 68, 12)}</div>
        <div class="cell c2"><svg width="13" height="12" viewBox="0 0 13 12"><path d="M3.500 3.500h9v7h-9Z" fill="none" stroke="#345" stroke-dasharray="2 1" /><path d="M0 1.500h9M1.500 0v10" stroke="#345" stroke-width=".9" /></svg></div>
        <div class="cell c3"><svg width="13" height="12" viewBox="0 0 13 12"><path d="M4.500 4.500h8v6h-8Z" fill="#fff" stroke="#345" /><path d="M3 1.500h9M1.500 3v8M4 0L2.500 1.500L4 3M11 0l1.500 1.500L11 3" fill="none" stroke="#345" stroke-width=".9" /></svg>${L("1920 × 1080piks.", 87, 12)}</div>
        <div class="cell c4"><svg width="12" height="12" viewBox="0 0 12 12"><path d="M.5.500h11v11h-11Z" fill="#fff" stroke="#23405f" /><path d="M3.500 1v4h5v-4M3.500 11.500v-4h5v4M5.500 8.500v2" fill="none" stroke="#23405f" /></svg>${L("Rozmiar: 476,0 KB", 93, 12)}</div>
        <div class="cell c5"></div>
        <svg width="216" height="24" viewBox="1702 1014 216 24">
          ${T("100%", 1723, 1031, 28, 12)}
          <g fill="#fbfbfb" stroke="#777" stroke-width="1.200"><circle cx="1766" cy="1027" r="7.500" /><circle cx="1888" cy="1027" r="7.500" /></g><path d="M1762 1027h8M1884 1027h8M1888 1023v8" stroke="#444" stroke-width="2" />
          <rect x="1784.500" y="1024.500" width="84" height="3" fill="#e7eaea" stroke="#d0d4d4" /><path d="M1822 1018h10v12l-5 5l-5-5Z" fill="#0078d7" />
          <g fill="#b8b8b8"><path d="M1914 1029h2v2h-2ZM1910 1032.500h2v2h-2ZM1914 1032.500h2v2h-2ZM1906 1036h2v2h-2ZM1910 1036h2v2h-2ZM1914 1036h2v2h-2Z" /></g>
        </svg>
      </div>`;
  }
}

@customElement("task-bar")
class TaskBar extends LitElement {
  static styles = css`
    :host { display: flex; height: 40px; background: #000106; }
    svg { display: block; flex: none; overflow: visible; }
    .item { width: 48px; height: 40px; display: flex; align-items: center; justify-content: center; position: relative; }
    .gapped { margin-left: 3px; }
    .wide { width: 49px; }
    .wider { width: 50px; }
    .active { background: #33363b; }
    .open::after { content: ""; position: absolute; bottom: 0; left: 4px; right: 4px; height: 2px; background: #76b5e8; }
    .active::after { content: ""; position: absolute; bottom: 0; left: 0; right: 0; height: 2px; background: #76b5e8; }
    .multi::after { background: linear-gradient(90deg, #76b5e8 31px, #222 31px, #222 32px, #5684ab 32px); }
    .tray { margin-left: auto; }
  `;
  render() {
    return html`
      <div class="item"><svg width="16" height="16" viewBox="0 0 16 16"><path d="M0 2.300L6.500 1.400V7.500H0ZM7.500 1.200L16 0V7.500H7.500ZM0 8.500H6.500V14.600L0 13.700ZM7.500 8.500H16V16L7.500 14.800Z" fill="#fff" /></svg></div>
      <div class="item"><svg width="16" height="16" viewBox="0 0 16 16" fill="none" stroke="#fff" stroke-width="1.400"><circle cx="10.200" cy="5.500" r="4.800" /><path d="M6.800 9L.500 15.500" /></svg></div>
      <div class="item"><svg width="20" height="14" viewBox="0 0 20 14" fill="none" stroke="#fff" stroke-width="1.200"><rect x="4.500" y=".5" width="11" height="13" /><path d="M2.500 2H.500V12H2.500M17.500 2H19.500V12H17.500" /></svg></div>
      <div class="item wide gapped"><svg width="20" height="22" viewBox="0 0 20 22"><path d="M.5 9.500Q2 .5 10.500 .500Q19.500 1 19.500 9.500V12.500H7Q7.500 17 12.500 17Q16 17 18.500 15.500V20Q16 21.500 12 21.500Q2.500 21 2.500 13Q3 8 8 5.500Q6.500 7 6.500 9H13.500Q13.500 5 9.500 5Q4 5 .5 9.500Z" fill="#0a78d6" /></svg></div>
      <div class="item open"><svg width="22" height="20" viewBox="0 0 22 20"><path d="M.5 1.500h8l1.500 2h11.500v15h-21Z" fill="#f7d774" /><path d="M.5 5h21v13.500h-21Z" fill="#fce596" /><path d="M2 1h5v1.500h-5Z" fill="#e9a53a" /><path d="M4 19v-7.500q0-1.500 1.500-1.500h11q1.500 0 1.500 1.500v7.500h-4v-4h-6v4Z" fill="#45b2d8" /></svg></div>
      <div class="item wide"><svg width="23" height="23" viewBox="0 0 23 23"><path d="M7.500 7V4q0-3 4-3t4 3v3M10 5q0-3 4-2.500" fill="none" stroke="#fff" stroke-width="1.300" /><path d="M0 6.500h23v14q0 2-2 2h-19q-2 0-2-2Z" fill="#fff" /><path d="M6 9h5v5h-5Z" fill="#e94f24" /><path d="M12 9h5v5h-5Z" fill="#7db900" /><path d="M6 15h5v5h-5Z" fill="#00a0e8" /><path d="M12 15h5v5h-5Z" fill="#fbb800" /></svg></div>
      <div class="item wider"><svg width="24" height="19" viewBox="0 0 24 19"><path d="M0 7L12 0L24 7V19H0Z" fill="#fff" /><path d="M1.500 7.500L22.500 7.500L13.500 12L17 15.500L1.500 7.500" fill="#000106" /></svg></div>
      <div class="item open multi"><svg width="24" height="22" viewBox="0 0 24 22"><rect x="1.500" y=".5" width="21" height="21" fill="#5f6164" /><path d="M0 8.500h5M0 14.500h5M17 11.500h7" stroke="#cfd4d8" stroke-width="1.200" /><path d="M4.500 4.500L18 11.500L4.500 18.500Z" fill="#ffd415" /><path d="M7 11.500h5M9.500 9v5" stroke="#6a5500" stroke-width="1.300" />${T("17", 14, 20.500, 7, 6.5, "#fff")}</svg></div>
      <div class="item wider"><svg width="23" height="23" viewBox="0 0 23 23"><defs><linearGradient id="ff" x1=".8" y1="0" x2=".3" y2="1"><stop offset="0" stop-color="#ffe226" /><stop offset=".45" stop-color="#ff9a1a" /><stop offset="1" stop-color="#f0284a" /></linearGradient></defs><circle cx="11.500" cy="12" r="10.500" fill="url(#ff)" /><path d="M1.500 9L4 2.500L7.500 6ZM13 1l5 2.500l3 5l-5 0Z" fill="#ffb020" /><path d="M7 7q4-4 8 0q3 4 .500 8q-4 3-8 0q-2.500-2-1-4.500q2 1.500 4-.5q-3 0-3.500-3Z" fill="#2a52a8" /></svg></div>
      <div class="item active"><svg width="24" height="23" viewBox="0 0 24 23"><path d="M1 14Q1 4 12 4Q21 4.500 20.500 12Q20 20 11 21.500Q6 22 7 18Q7 16 4.500 16Q1 17 1 14Z" fill="#cfe6f6" stroke="#8db6d4" /><circle cx="5" cy="12.500" r="1.800" fill="#e2432e" /><circle cx="9" cy="8" r="2" fill="#44a84c" /><circle cx="14" cy="7" r="1.900" fill="#f4a52a" /><circle cx="11.500" cy="14" r="2" fill="#223f70" /><path d="M12.500 22L20.500 4" stroke="#d28b42" stroke-width="2.400" /><path d="M18 5l2-4.500l4 1l-2.500 4.500Z" fill="#e8c08c" /></svg></div>
      <svg class="tray" width="190" height="40" viewBox="1730 1040 190 40">
        <g fill="none" stroke="#fff" stroke-width="1.300"><path d="M1735.500 1063l5.500-5.500l5.500 5.500" /><path d="M1762.500 1055.500h10v8.500h-8.500M1757.500 1055.500h4v4h-4ZM1759.500 1060v6.500h4M1768 1064v3" stroke-width="1.100" />
        <path d="M1781.500 1058h2.500l4-3.500v11.500l-4-3.500h-2.500Z" stroke-width="1.100" /><path d="M1790 1058q1.500 2.300 0 4.500M1792.500 1056q3 4.300 0 8.500M1795 1054.500q4 5.800 0 11.500" stroke-width="1.100" />
        <path d="M1879.500 1052.500h15v12h-5l-2.500 2.500l-2.500-2.500h-5Z" /></g>
        <circle cx="1768.500" cy="1063.500" r="4.500" fill="#e0343c" /><path d="M1766.500 1061.500l4 4M1770.500 1061.500l-4 4" stroke="#fff" stroke-width="1.300" />
        ${T("10:32", 1820.5, 1054.5, 26.5, 12, "#fff")}${T("26.04.2018", 1807, 1072.5, 54, 12, "#fff")}
        <path d="M1915.500 1040v40" stroke="#4a4c50" />
      </svg>`;
  }
}

@customElement("app-root")
class AppRoot extends LitElement {
  static styles = css`
    :host { display: flex; flex-direction: column; width: 1920px; height: 1080px; overflow: hidden; }
    .desk { display: flex; height: 1040px; flex: none; }
    .desk > * { flex: none; }
  `;
  render() {
    return html`<div class="desk"><vi-window .charts=${LEFT} .needle=${28.6}></vi-window><paint-window></paint-window></div><task-bar></task-bar>`;
  }
}
